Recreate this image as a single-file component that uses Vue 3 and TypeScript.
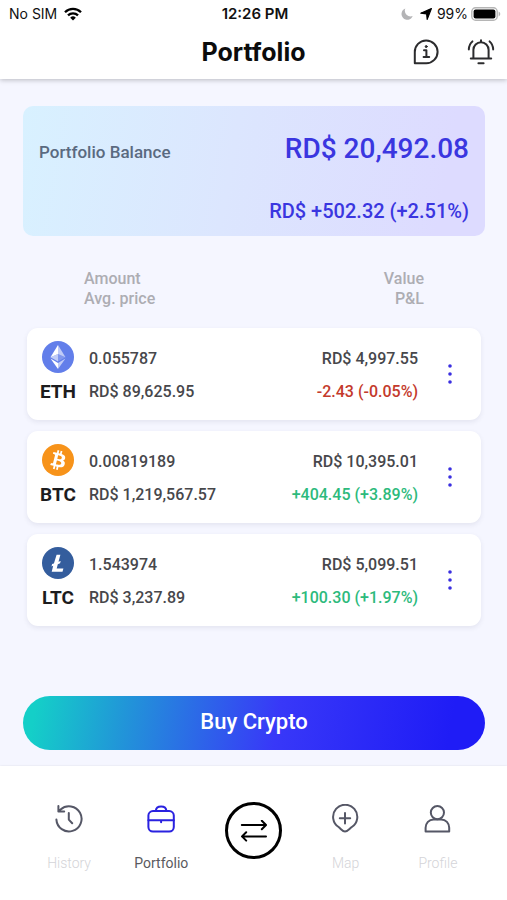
<script setup lang="ts">
type Coin = 'ETH' | 'BTC' | 'LTC'

interface Holding {
  symbol: Coin
  amount: string
  price: string
  value: string
  pnl: string
  gain: boolean
}

const holdings: Holding[] = [
  { symbol: 'ETH', amount: '0.055787', price: 'RD$ 89,625.95', value: 'RD$ 4,997.55', pnl: '-2.43 (-0.05%)', gain: false },
  { symbol: 'BTC', amount: '0.00819189', price: 'RD$ 1,219,567.57', value: 'RD$ 10,395.01', pnl: '+404.45 (+3.89%)', gain: true },
  { symbol: 'LTC', amount: '1.543974', price: 'RD$ 3,237.89', value: 'RD$ 5,099.51', pnl: '+100.30 (+1.97%)', gain: true },
]
</script>

<template>
  <div class="app">
    <header class="top">
      <div class="status">
        <div class="status-left">
          <span>No SIM</span>
          <svg class="wifi" viewBox="0 0 18 14" aria-hidden="true">
            <g fill="none" stroke="#000" stroke-width="2.3">
              <path d="M1 5.2a11.4 11.4 0 0 1 16 0" />
              <path d="M4 8.4a7.1 7.1 0 0 1 10 0" />
            </g>
            <path d="M6.2 10.7a4 4 0 0 1 5.6 0L9 13.6z" />
          </svg>
        </div>
        <span class="clock">12:26 PM</span>
        <div class="status-right">
          <svg class="moon" viewBox="0 0 12 12" aria-hidden="true">
            <path d="M4.3.5a5.8 5.8 0 1 0 7.4 7.6A5.8 5.8 0 0 1 4.3.5z" fill="#b4b4b6" />
          </svg>
          <svg class="arrow" viewBox="0 0 12 12" aria-hidden="true">
            <path d="M11.4.6 7.2 11.4 6.6 5.8.8 5.2z" stroke="#000" stroke-width="1.2" stroke-linejoin="round" />
          </svg>
          <span>99%</span>
          <svg class="battery" viewBox="0 0 30 14" aria-hidden="true">
            <rect x=".8" y=".8" width="25.4" height="12.4" rx="3.8" fill="#fff" stroke="#b5b5b5" stroke-width="1.4" />
            <rect x="2.6" y="2.6" width="21.8" height="8.8" rx="2" />
            <path d="M27.6 4.6c2.2.8 2.2 4 0 4.8z" fill="#b5b5b5" />
          </svg>
        </div>
      </div>
      <div class="titlebar">
        <h1>Portfolio</h1>
        <div class="actions">
          <button type="button" aria-label="Information">
            <svg viewBox="0 0 28 28" fill="none" stroke="#2c2c2e" stroke-width="2" stroke-linecap="round" stroke-linejoin="round">
              <path d="M2.8 25.2V14A11.4 11.4 0 1 1 14.2 25.2z" />
              <path d="M12 12.2h2.4v6.6M11.6 19h5.6" />
              <circle cx="14.2" cy="8.6" r="1" fill="#2c2c2e" stroke-width="1" />
            </svg>
          </button>
          <button type="button" aria-label="Notifications">
            <svg viewBox="0 0 28 28" fill="none" stroke="#2c2c2e" stroke-width="2" stroke-linecap="round" stroke-linejoin="round">
              <path d="M14 2.2v1.6M3.8 20.4h20.4M6.4 20.4v-8.6a7.6 7.6 0 0 1 15.2 0v8.6M11.4 25.2h5.2" />
              <path d="M1.8 11.4c.2-3.6 1.4-6.2 3.6-8M26.2 11.4c-.2-3.6-1.4-6.2-3.6-8" />
            </svg>
          </button>
        </div>
      </div>
    </header>

    <main class="content">
      <section class="balance">
        <h2>Portfolio Balance</h2>
        <p class="total">RD$ 20,492.08</p>
        <p class="change">RD$ +502.32 (+2.51%)</p>
      </section>

      <div class="legend">
        <p>Amount<br />Avg. price</p>
        <p class="legend-right">Value<br />P&amp;L</p>
      </div>

      <ul class="holdings">
        <li v-for="h in holdings" :key="h.symbol" class="holding">
          <svg class="coin" viewBox="0 0 32 32" aria-hidden="true">
            <template v-if="h.symbol === 'ETH'">
              <circle cx="16" cy="16" r="16" fill="#627eea" />
              <path d="M16 4v8.9l7.5 3.3z" fill="#fff" fill-opacity=".6" />
              <path d="M16 4 8.5 16.2l7.5-3.3z" fill="#fff" />
              <path d="M16 22v6l7.5-10.4z" fill="#fff" fill-opacity=".6" />
              <path d="M16 28v-6l-7.5-4.4z" fill="#fff" />
              <path d="m16 20.6 7.5-4.4-7.5-3.3z" fill="#fff" fill-opacity=".2" />
              <path d="m8.5 16.2 7.5 4.4v-7.7z" fill="#fff" fill-opacity=".6" />
            </template>
            <template v-else-if="h.symbol === 'BTC'">
              <circle cx="16" cy="16" r="16" fill="#f7931a" />
              <path
                fill="#fff"
                fill-rule="evenodd"
                d="M23.19 14.02c.31-2.1-1.29-3.23-3.47-3.98l.71-2.84-1.73-.43-.69 2.76-1.38-.33.69-2.77-1.72-.43-.71 2.83-1.1-.26-2.38-.6-.46 1.85s1.28.3 1.25.31c.7.18.83.64.81 1.01l-1.94 7.78c-.09.21-.3.53-.79.41.02.02-1.25-.32-1.25-.32l-.86 1.98 2.25.56 1.23.32-.71 2.86 1.72.43.71-2.83 1.38.36-.71 2.82 1.73.43.71-2.86c2.95.56 5.16.34 6.09-2.33.75-2.15-.04-3.39-1.59-4.19 1.13-.26 1.98-1 2.21-2.54zm-3.95 5.54c-.53 2.15-4.15.99-5.32.7l.95-3.81c1.17.29 4.94.87 4.37 3.11zm.54-5.57c-.49 1.95-3.5.96-4.48.72l.86-3.46c.98.24 4.13.7 3.62 2.74z"
              />
            </template>
            <template v-else>
              <circle cx="16" cy="16" r="16" fill="#345d9d" />
              <path
                fill="#fff"
                d="M14.6 7.8h3.8l-1.9 7 2.2-.9-.6 2.4-2.3.9-1.1 4.2h6.7l-.9 3.3H9.7l1.5-5.9-1.7.7.6-2.4 1.8-.7z"
              />
            </template>
          </svg>
          <span class="amount">{{ h.amount }}</span>
          <span class="value">{{ h.value }}</span>
          <strong class="symbol">{{ h.symbol }}</strong>
          <span class="price">{{ h.price }}</span>
          <span class="value" :class="h.gain ? 'gain' : 'loss'">{{ h.pnl }}</span>
          <button type="button" class="more" :aria-label="`${h.symbol} options`">
            <svg viewBox="0 0 6 20" fill="#3a2fe0" aria-hidden="true">
              <circle cx="3" cy="2" r="1.8" />
              <circle cx="3" cy="10" r="1.8" />
              <circle cx="3" cy="18" r="1.8" />
            </svg>
          </button>
        </li>
      </ul>

      <button type="button" class="buy">Buy Crypto</button>
    </main>

    <nav class="tabs">
      <a href="#history" class="tab">
        <svg viewBox="0 0 30 30">
          <path d="M2.4 15.6A12.6 12.6 0 1 0 6.6 5.4L4.4 7.4M4.4 2v5.6h5.8M14.8 9v6.6l3.4 3.6" />
        </svg>
        <span>History</span>
      </a>
      <a href="#portfolio" class="tab active" aria-current="page">
        <svg viewBox="0 0 30 30">
          <rect x="2.4" y="7" width="25.4" height="20.6" rx="4.6" />
          <path d="M9.8 6.8c.2-2.8 1.8-4.4 5.3-4.4s5.1 1.6 5.3 4.4M2.4 16.2h25.4M15.1 16.4v1.8" />
        </svg>
        <span>Portfolio</span>
      </a>
      <a href="#swap" class="swap" aria-label="Swap">
        <svg viewBox="0 0 28 22">
          <path d="M2.8 5h24M22.8.8 27 5l-4.2 4.2M27 16.4H3M7.2 12.2 3 16.4l4.2 4.2" />
        </svg>
      </a>
      <a href="#map" class="tab">
        <svg viewBox="0 0 30 30">
          <path d="M14 27.6c-2.2 0-3.6-2.2-6.4-4.6A12.1 12.1 0 1 1 20.8 23c-3 2.4-4.4 4.6-6.8 4.6zM14 9v10.4M8.8 14.2h10.4" />
        </svg>
        <span>Map</span>
      </a>
      <a href="#profile" class="tab">
        <svg viewBox="0 0 30 30">
          <circle cx="14.4" cy="8.6" r="6.6" />
          <path d="M2.6 27.4v-3.6c0-4.6 3.4-8.4 8-8.4h7.6c4.6 0 8 3.8 8 8.4v3.6z" />
        </svg>
        <span>Profile</span>
      </a>
    </nav>
  </div>
</template>

<style>
body {
  margin: 0;
  background: #f5f6ff;
}
</style>

<style scoped>
.app {
  display: flex;
  flex-direction: column;
  min-height: 100vh;
  font-family: Roboto, 'Liberation Sans', sans-serif;
  font-weight: 500;
  font-size: 16px;
  background: #f5f6ff;
}

h1,
h2,
p,
ul {
  margin: 0;
  padding: 0;
}

button {
  padding: 0;
  border: 0;
  background: none;
  font: inherit;
  cursor: pointer;
}

svg {
  display: block;
}

.top {
  background: #fff;
  box-shadow: 0 1px 5px rgba(0, 0, 0, 0.25);
}

.status {
  display: grid;
  grid-template-columns: 1fr auto 1fr;
  align-items: center;
  height: 27px;
  padding: 0 6px 0 9px;
  font-family: Inter, sans-serif;
  font-size: 14px;
  font-weight: 400;
  color: #111;
}

.status-left,
.status-right {
  display: flex;
  align-items: center;
  gap: 7px;
}

.status-right {
  justify-content: flex-end;
  gap: 3px;
}

.clock {
  font-size: 15px;
  font-weight: 600;
}

.wifi {
  width: 18px;
  height: 14px;
}

.moon,
.arrow {
  width: 12px;
  height: 12px;
}

.arrow {
  margin: 0 2px 0 4px;
}

.battery {
  width: 30px;
  height: 14px;
}

.titlebar {
  display: grid;
  grid-template-columns: 1fr auto 1fr;
  align-items: center;
  height: 52px;
  padding: 0 12px 2px;
  box-sizing: border-box;
}

h1 {
  grid-column: 2;
  font-family: Inter, sans-serif;
  font-size: 25px;
  font-weight: 700;
  line-height: 32px;
  color: #0c0c0c;
}

.actions {
  display: flex;
  justify-content: flex-end;
  gap: 27px;
}

.actions svg {
  width: 28px;
  height: 28px;
}

.content {
  flex: 1;
  display: flex;
  flex-direction: column;
  padding: 27px 22px 16px 23px;
}

.balance {
  display: grid;
  grid-template-columns: auto 1fr;
  align-items: baseline;
  row-gap: 32px;
  padding: 26px 16px 12px;
  border-radius: 10px;
  background: linear-gradient(100deg, #d8f1ff 0%, #dce6fe 45%, #dddbff 90%);
  color: #3a36e0;
}

h2 {
  font-size: 17px;
  font-weight: 500;
  color: #5a6a80;
}

.total {
  font-size: 28px;
  line-height: 34px;
  text-align: right;
}

.change {
  grid-column: 1 / -1;
  font-size: 20px;
  line-height: 26px;
  text-align: right;
}

.legend {
  display: flex;
  justify-content: space-between;
  padding: 33px 61px 19px;
  line-height: 20px;
  color: #adadb3;
}

.legend-right {
  text-align: right;
}

.holdings {
  display: flex;
  flex-direction: column;
  gap: 11px;
  padding: 0 4px;
  list-style: none;
}

.holding {
  display: grid;
  grid-template-columns: 62px 1fr auto 63px;
  grid-template-rows: 34px 32px;
  align-items: center;
  padding: 13px 0;
  border-radius: 11px;
  background: #fff;
  box-shadow: 0 2px 5px rgba(60, 60, 90, 0.09);
  color: #47474b;
}

.coin {
  width: 32px;
  height: 32px;
  align-self: start;
  justify-self: center;
}

.symbol {
  justify-self: center;
  font-size: 19px;
  font-weight: 700;
  color: #1c1c1e;
}

.value {
  grid-column: 3;
  text-align: right;
}

.gain {
  color: #2dba7c;
}

.loss {
  color: #c43a2c;
}

.more {
  grid-column: 4;
  grid-row: 1 / 3;
  justify-self: center;
  padding: 8px;
}

.more svg {
  width: 6px;
  height: 20px;
}

.buy {
  height: 54px;
  margin-top: auto;
  padding-bottom: 4px;
  border-radius: 27px;
  background: linear-gradient(100deg, #14cfc8 3%, #2196d8 22%, #3838f8 55%, #1f1cf6 92%);
  font-size: 22px;
  color: #fff;
}

.tabs {
  display: grid;
  grid-template-columns: repeat(5, 1fr);
  justify-items: center;
  align-items: start;
  box-sizing: border-box;
  height: 134px;
  padding: 36px 23px 0;
  background: #fff;
  box-shadow: 0 0 2px rgba(0, 0, 0, 0.1);
}

.tab {
  display: flex;
  flex-direction: column;
  align-items: center;
  gap: 19px;
  padding-top: 2px;
  font-size: 14px;
  font-weight: 300;
  line-height: 20px;
  color: #d4d4d8;
  text-decoration: none;
}

.tab svg {
  width: 30px;
  height: 30px;
  fill: none;
  stroke: #555766;
  stroke-width: 2;
  stroke-linecap: round;
  stroke-linejoin: round;
}

.active {
  font-weight: 400;
  color: #5a5a5e;
}

.active svg {
  stroke: #2a22e0;
}

.swap {
  display: grid;
  place-items: center;
  box-sizing: border-box;
  width: 57px;
  height: 57px;
  border: 3px solid #000;
  border-radius: 50%;
}

.swap svg {
  width: 28px;
  height: 22px;
  fill: none;
  stroke: #000;
  stroke-width: 2;
  stroke-linecap: round;
  stroke-linejoin: round;
}
</style>
